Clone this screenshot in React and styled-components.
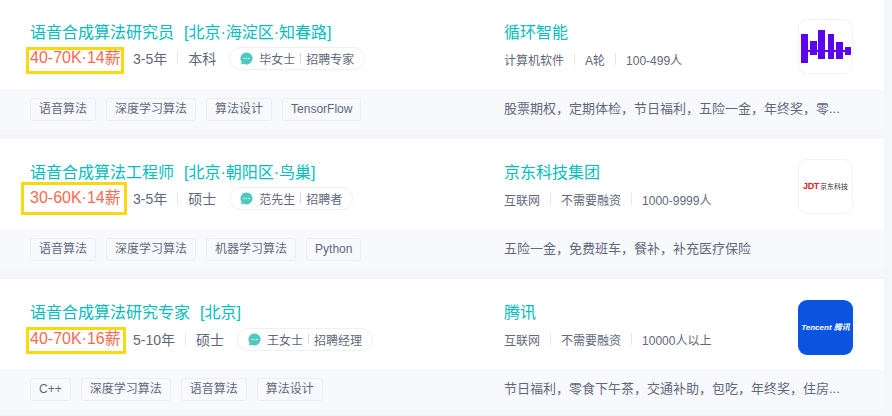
import React from 'react'
import styled, { createGlobalStyle } from 'styled-components'

const GlobalStyle = createGlobalStyle`
  html, body {
    margin: 0;
    padding: 0;
    background: #f5f6f9;
    overflow: hidden;
  }
  * {
    box-sizing: border-box;
  }
  body {
    font-family: "Liberation Sans", "Noto Sans CJK SC", sans-serif;
  }
`

const List = styled.div`
  width: 884px;
  margin-top: -1px;
  display: flex;
  flex-direction: column;
  gap: 10px;
`

const Card = styled.div`
  background: #fff;
  height: 130px;
  display: flex;
  flex-direction: column;
`

const Top = styled.div`
  height: 90px;
  display: flex;
  padding: 22px 31px 0 30px;
`

const Primary = styled.div`
  width: 474px;
`

const TitleRow = styled.div`
  height: 24px;
  line-height: 24px;
  font-size: 16px;
  color: #00bebd;
  white-space: nowrap;
  display: flex;
  gap: 10px;
`

const InfoRow = styled.div`
  display: flex;
  align-items: center;
  height: 24px;
  margin-top: ${p => p.$mt}px;
  font-size: 14px;
  color: #61687c;
  white-space: nowrap;
`

const SalaryBox = styled.span`
  position: relative;
  font-size: 16px;
  color: #fd6a50;
  margin-right: 12px;
  line-height: 24px;
  width: 91px;
`

const Highlight = styled.span`
  position: absolute;
  left: ${p => p.$l}px;
  width: ${p => p.$w}px;
  top: ${p => p.$t}px;
  height: ${p => p.$h}px;
  border: 3px solid #fcd90f;
`

const Sep = styled.i`
  display: inline-block;
  width: 1px;
  height: 12px;
  background: #e3e7ed;
  margin: 0 10px;
`

const Recruiter = styled.span`
  display: inline-flex;
  align-items: center;
  height: 23px;
  margin-left: 13px;
  padding: 0 10px;
  border: 1px solid #eef0f3;
  border-radius: 12px;
  font-size: 12px;
  color: #61687c;
`

const ChatIcon = styled.svg`
  width: 13px;
  height: 13px;
  margin-right: 6px;
  flex: none;
`

const RecruiterSep = styled.i`
  display: inline-block;
  width: 1px;
  height: 10px;
  background: #d5d9e0;
  margin: 0 5px;
`

const Company = styled.div`
  flex: 1;
`

const CompanyName = styled.div`
  height: 24px;
  line-height: 24px;
  font-size: 16px;
  color: #00bebd;
`

const CompanyMeta = styled.div`
  display: flex;
  align-items: center;
  height: 20px;
  margin-top: 4px;
  font-size: 12px;
  color: #61687c;
  white-space: nowrap;
`

const LogoBox = styled.div`
  width: 55px;
  height: 55px;
  margin-top: ${p => p.$mt}px;
  border-radius: 9px;
  border: ${p => (p.$bg ? 'none' : '1px solid #f2f3f8')};
  background: ${p => p.$bg || '#fff'};
  display: flex;
  align-items: center;
  justify-content: center;
  overflow: hidden;
`

const Footer = styled.div`
  height: 40px;
  background: #f8f9fc;
  display: flex;
  align-items: center;
  padding: 0 30px;
`

const Tags = styled.div`
  width: 474px;
  display: flex;
  gap: 10px;
`

const Tag = styled.span`
  height: 23px;
  line-height: 21px;
  padding: 0 8px;
  font-size: 12px;
  color: #61687c;
  background: #f8f9fc;
  border: 1px solid #eceef2;
  border-radius: 3px;
  white-space: nowrap;
`

const Welfare = styled.div`
  margin-bottom: 4px;
  font-size: 13px;
  color: #61687c;
  white-space: nowrap;
`

const JdtMark = styled.span`
  font-size: 9px;
  line-height: 1;
  font-weight: 700;
  color: #e2231a;
  letter-spacing: -0.3px;
`

const JdtName = styled.span`
  font-size: 7px;
  line-height: 1;
  color: #333;
  margin-left: 1px;
`

const TencentText = styled.span`
  color: #fff;
  font-size: 8px;
  line-height: 1;
  font-style: italic;
  font-weight: 700;
  white-space: nowrap;
`

const WaveLogo = () => (
  <svg width="53" height="53" viewBox="0 0 53 53">
    <g fill="#5b05ee">
      <rect x="2" y="14" width="7" height="29" />
      <rect x="11" y="21" width="7" height="14" />
      <rect x="19" y="10" width="7" height="29" />
      <rect x="29" y="14" width="6" height="25" />
      <rect x="37" y="22" width="7" height="17" />
      <rect x="46" y="27" width="6" height="8" />
      <rect x="9" y="30" width="37" height="2" />
    </g>
  </svg>
)

const jobs = [
  {
    title: '语音合成算法研究员',
    place: '[北京·海淀区·知春路]',
    salary: '40-70K·14薪',
    box: { l: -4, w: 98, t: 1, h: 27 },
    infoGap: 1,
    exp: '3-5年',
    edu: '本科',
    name: '毕女士',
    role: '招聘专家',
    company: '循环智能',
    meta: ['计算机软件', 'A轮', '100-499人'],
    tags: ['语音算法', '深度学习算法', '算法设计', 'TensorFlow'],
    welfare: '股票期权，定期体检，节日福利，五险一金，年终奖，零...',
    logo: <LogoBox $mt={-2}><WaveLogo /></LogoBox>,
  },
  {
    title: '语音合成算法工程师',
    place: '[北京·朝阳区·鸟巢]',
    salary: '30-60K·14薪',
    box: { l: -9, w: 106, t: -4, h: 33 },
    infoGap: 1,
    exp: '3-5年',
    edu: '硕士',
    name: '范先生',
    role: '招聘者',
    company: '京东科技集团',
    meta: ['互联网', '不需要融资', '1000-9999人'],
    tags: ['语音算法', '深度学习算法', '机器学习算法', 'Python'],
    welfare: '五险一金，免费班车，餐补，补充医疗保险',
    logo: (
      <LogoBox $mt={-2}>
        <JdtMark>JDT</JdtMark>
        <JdtName>京东科技</JdtName>
      </LogoBox>
    ),
  },
  {
    title: '语音合成算法研究专家',
    place: '[北京]',
    salary: '40-70K·16薪',
    box: { l: -4, w: 100, t: 0, h: 27 },
    infoGap: 2,
    exp: '5-10年',
    edu: '硕士',
    name: '王女士',
    role: '招聘经理',
    company: '腾讯',
    meta: ['互联网', '不需要融资', '10000人以上'],
    tags: ['C++', '深度学习算法', '语音算法', '算法设计'],
    welfare: '节日福利，零食下午茶，交通补助，包吃，年终奖，住房...',
    logo: (
      <LogoBox $mt={-1} $bg="#0b54df">
        <TencentText>Tencent 腾讯</TencentText>
      </LogoBox>
    ),
  },
]

const App = () => (
  <>
    <GlobalStyle />
    <List>
      {jobs.map(job => (
        <Card key={job.title}>
          <Top>
            <Primary>
              <TitleRow>
                <span>{job.title}</span>
                <span>{job.place}</span>
              </TitleRow>
              <InfoRow $mt={job.infoGap}>
                <SalaryBox>
                  {job.salary}
                  <Highlight $l={job.box.l} $w={job.box.w} $t={job.box.t} $h={job.box.h} />
                </SalaryBox>
                <span>{job.exp}</span>
                <Sep />
                <span>{job.edu}</span>
                <Recruiter>
                  <ChatIcon viewBox="0 0 14 14">
                    <path
                      d="M7 0.5a6.5 6.5 0 1 1-3.2 12.15L1 13.4l.75-2.6A6.5 6.5 0 0 1 7 .5z"
                      fill="#4ec8c0"
                    />
                    <circle cx="4.4" cy="7" r=".8" fill="#fff" />
                    <circle cx="7" cy="7" r=".8" fill="#fff" />
                    <circle cx="9.6" cy="7" r=".8" fill="#fff" />
                  </ChatIcon>
                  {job.name}
                  <RecruiterSep />
                  {job.role}
                </Recruiter>
              </InfoRow>
            </Primary>
            <Company>
              <CompanyName>{job.company}</CompanyName>
              <CompanyMeta>
                {job.meta.map((m, i) => (
                  <React.Fragment key={m}>
                    {i > 0 && <Sep />}
                    <span>{m}</span>
                  </React.Fragment>
                ))}
              </CompanyMeta>
            </Company>
            {job.logo}
          </Top>
          <Footer>
            <Tags>
              {job.tags.map(t => (
                <Tag key={t}>{t}</Tag>
              ))}
            </Tags>
            <Welfare>{job.welfare}</Welfare>
          </Footer>
        </Card>
      ))}
    </List>
  </>
)

export default App
